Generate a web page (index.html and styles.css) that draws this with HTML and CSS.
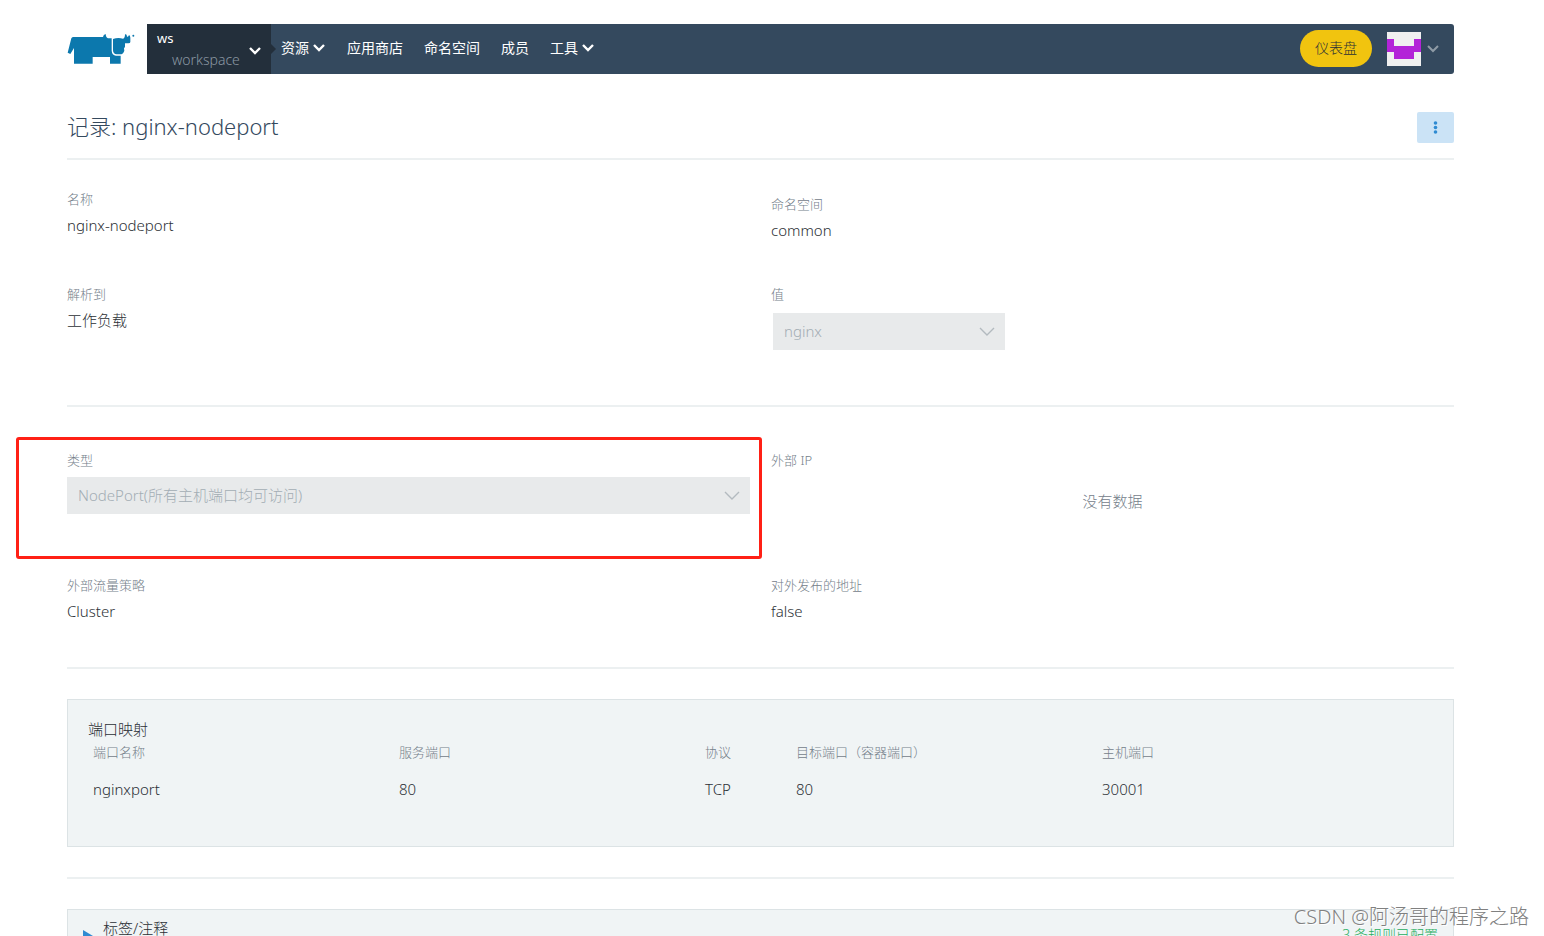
FILE: index.html
```html
<!DOCTYPE html>
<html lang="zh-CN">
<head>
<meta charset="utf-8">
<title>nginx-nodeport</title>
<link rel="stylesheet" href="styles.css">
</head>
<body>
<div class="page">
  <header class="header">
    <a class="logo" href="#" aria-label="Rancher">
      <svg width="68" height="34" viewBox="33 36 204 102" fill="#0c78ad">
        <path d="M35 98 L46 55 Q48 51 53 51 H141 Q142 43 149 42 Q150 53 156 55 H167 V92 Q168 106 180 107 H194 V131 H162 V111 H110 V131 H54 V84 L43 102Z"/>
        <path d="M171 57 Q186 52 201 56 Q207 55 207 43 Q213 42 213 50 Q217 52 219 45 Q223 47 223 53 V66 Q223 70 217 70 H207 V80 Q202 85 205 92 Q202 103 192 103 H182 Q171 102 171 90Z"/>
        <circle cx="232" cy="47" r="3"/>
      </svg>
    </a>
    <nav class="bar">
      <button class="scope" type="button">
        <span class="scope-text"><span class="scope-name">ws</span><span class="scope-sub">workspace</span></span>
        <svg class="chev" width="14" height="10" viewBox="0 0 14 10"><path d="M2 2l5 5 5-5"/></svg>
      </button>
      <ul class="menu">
        <li><a href="#">资源<svg class="chev" width="14" height="10" viewBox="0 0 14 10"><path d="M2 2l5 5 5-5"/></svg></a></li>
        <li><a href="#">应用商店</a></li>
        <li><a href="#">命名空间</a></li>
        <li><a href="#">成员</a></li>
        <li><a href="#">工具<svg class="chev" width="14" height="10" viewBox="0 0 14 10"><path d="M2 2l5 5 5-5"/></svg></a></li>
      </ul>
      <button class="dashboard" type="button">仪表盘</button>
      <button class="user" type="button" aria-label="User">
        <svg width="34" height="34" viewBox="0 0 34 34"><path fill="#f0f0f0" d="M0 0h34v34H0z"/><path fill="#b324d8" d="M0 7h7v7h20V7h7v13h-7v7H7v-7H0z"/></svg>
        <svg class="chev chev-dim" width="14" height="10" viewBox="0 0 14 10"><path d="M2 2l5 5 5-5"/></svg>
      </button>
    </nav>
  </header>

  <main>
    <div class="title-row">
      <h1>记录: nginx-nodeport</h1>
      <button class="more" type="button" aria-label="More"><svg width="5" height="13" viewBox="0 0 5 13" fill="#2f8bd2"><circle cx="2.500" cy="2" r="1.800"/><circle cx="2.500" cy="6.500" r="1.800"/><circle cx="2.500" cy="11" r="1.800"/></svg></button>
    </div>

    <section class="fields first">
      <div class="field"><div class="label">名称</div><div class="value">nginx-nodeport</div></div>
      <div class="field lowered"><div class="label">命名空间</div><div class="value">common</div></div>
      <div class="field"><div class="label">解析到</div><div class="value">工作负载</div></div>
      <div class="field"><label class="label" for="target">值</label>
        <div class="select narrow"><select id="target" disabled><option>nginx</option></select><svg width="16" height="9" viewBox="0 0 16 9"><path d="M1 1l7 7 7-7"/></svg></div>
      </div>
    </section>

    <section class="fields second">
      <div class="field type"><label class="label" for="type">类型</label>
        <div class="select"><select id="type" disabled><option>NodePort(所有主机端口均可访问)</option></select><svg width="16" height="9" viewBox="0 0 16 9"><path d="M1 1l7 7 7-7"/></svg></div>
        <div class="marker"></div>
      </div>
      <div class="field"><div class="label">外部 IP</div><div class="empty">没有数据</div></div>
      <div class="field"><div class="label">外部流量策略</div><div class="value">Cluster</div></div>
      <div class="field"><div class="label">对外发布的地址</div><div class="value">false</div></div>
    </section>

    <section class="panel">
      <h2>端口映射</h2>
      <table>
        <colgroup><col class="c-wide"><col class="c-wide"><col class="c-slim"><col class="c-wide"><col></colgroup>
        <thead><tr><th>端口名称</th><th>服务端口</th><th>协议</th><th>目标端口（容器端口）</th><th>主机端口</th></tr></thead>
        <tbody><tr><td>nginxport</td><td>80</td><td>TCP</td><td>80</td><td>30001</td></tr></tbody>
      </table>
    </section>

    <hr>

    <button class="accordion" type="button">
      <svg width="10" height="12" viewBox="0 0 10 12"><path fill="#2f8bd2" d="M0 0l10 6-10 6z"/></svg>
      <span class="acc-title">标签/注释</span>
      <span class="acc-status">3 条规则已配置</span>
    </button>
  </main>
</div>
<div class="watermark">CSDN @阿汤哥的程序之路</div>
</body>
</html>
```
FILE: styles.css
```css
* { box-sizing: border-box; }
body {
  margin: 0;
  height: 100vh;
  overflow: hidden;
  position: relative;
  background: #fff;
  color: #2c3035;
  font-family: "Noto Sans", "Noto Sans CJK SC", sans-serif;
  font-size: 15px;
  font-weight: 300;
}
button { font: inherit; color: inherit; border: 0; margin: 0; padding: 0; cursor: pointer; }
a { color: inherit; text-decoration: none; }
.page { padding: 24px 90px 0 67px; }

.header { display: flex; }
.logo { width: 80px; flex: none; padding-top: 8px; }
.logo svg { display: block; }
.bar {
  flex: 1;
  height: 50px;
  display: flex;
  align-items: center;
  background: #34495e;
  border-radius: 0 3px 3px 0;
  color: #fff;
  font-size: 14px;
}
.chev { fill: none; stroke: #fff; stroke-width: 2.4; }
.chev-dim { stroke: #8f9ba6; stroke-width: 2; }
.scope {
  position: relative;
  width: 124px;
  height: 50px;
  padding: 4px 9px 4px 10px;
  display: flex;
  align-items: center;
  justify-content: space-between;
  background: #232f3b;
  text-align: left;
}
.scope::after {
  content: "";
  position: absolute;
  left: 100%;
  top: 20px;
  border: 5px solid transparent;
  border-left-color: #232f3b;
  border-right: 0;
}
.scope-text { display: flex; flex-direction: column; line-height: 21px; }
.scope-name { font-size: 13px; font-weight: 400; }
.scope-sub { padding-left: 15px; color: #8b98a3; }
.scope .chev { margin-left: -2px; margin-top: 4px; flex: none; }
.menu { flex: 1; display: flex; gap: 21px; list-style: none; margin: 0; padding: 0 0 2px 10px; }
.menu a { display: flex; align-items: center; gap: 3px; line-height: 20px; font-weight: 400; }
.dashboard {
  width: 72px;
  height: 37px;
  margin-bottom: 2px;
  padding-bottom: 2px;
  border-radius: 19px;
  background: #f1c40f;
  color: #2c3035;
}
.user { display: flex; align-items: center; gap: 5px; margin: 0 14px 0 15px; background: none; }

.title-row {
  margin-top: 36px;
  padding-bottom: 15px;
  border-bottom: 2px solid #ecf0f1;
  display: flex;
  justify-content: space-between;
  align-items: flex-end;
}
h1 { margin: 0; font-size: 22px; font-weight: 300; line-height: 33px; color: #34495e; }
.more {
  width: 37px;
  height: 31px;
  display: flex;
  align-items: center;
  justify-content: center;
  background: #cbe3f6;
  border-radius: 2px;
}

.fields { display: grid; grid-template-columns: 1fr 1fr; column-gap: 21px; border-bottom: 2px solid #ecf0f1; }
.first { padding: 29px 0 55px; row-gap: 39px; }
.second { padding: 43px 0 41px; row-gap: 61px; }
.lowered { padding-top: 5px; }
.label { display: block; font-size: 13px; line-height: 21px; color: #74808a; }
.value { line-height: 30px; }
.select { position: relative; margin-top: 6px; }
.select.narrow { width: 232px; margin: 8px 0 0 2px; }
.select select {
  display: block;
  width: 100%;
  height: 37px;
  padding: 0 36px 2px 11px;
  border: 0;
  border-radius: 0;
  appearance: none;
  background: #e8eaeb;
  color: #a3adb4;
  font: inherit;
  opacity: 1;
}
.select svg { position: absolute; right: 10px; top: 14px; fill: none; stroke: #b3babf; stroke-width: 1.4; }
.type { position: relative; }
.marker {
  position: absolute;
  inset: -13px -12px -45px -51px;
  border: 3px solid #ff2015;
  border-radius: 3px;
  pointer-events: none;
}
.empty { padding-top: 18px; text-align: center; line-height: 24px; color: #74808a; }

.panel { margin-top: 30px; padding: 18px 20px 42px; background: #f0f4f5; border: 1px solid #dce3e5; }
h2 { margin: 0; font-size: 15px; font-weight: 300; line-height: 22px; }
table { width: 100%; table-layout: fixed; border-collapse: collapse; }
.c-wide { width: 306px; }
.c-slim { width: 91px; }
th, td { padding: 0 5px; text-align: left; font-weight: 300; }
th { font-size: 13px; line-height: 24px; color: #74808a; }
td { padding-top: 10px; line-height: 30px; }
hr { margin: 30px 0; border: 0; height: 2px; background: #ecf0f1; }
.accordion {
  width: 100%;
  height: 52px;
  padding: 7px 15px;
  display: flex;
  align-items: flex-start;
  background: #f0f4f5;
  border: 1px solid #dce3e5;
  text-align: left;
}
.accordion svg { margin: 13px 10px 0 0; flex: none; }
.acc-title { flex: 1; line-height: 22px; }
.acc-status { margin-top: 5px; font-size: 14px; line-height: 26px; color: #27ae60; }
.watermark {
  position: absolute;
  right: 15px;
  bottom: 4px;
  font-size: 20px;
  line-height: 30px;
  color: #808080;
  text-shadow: 1px 1px 0 #fff;
}
```
